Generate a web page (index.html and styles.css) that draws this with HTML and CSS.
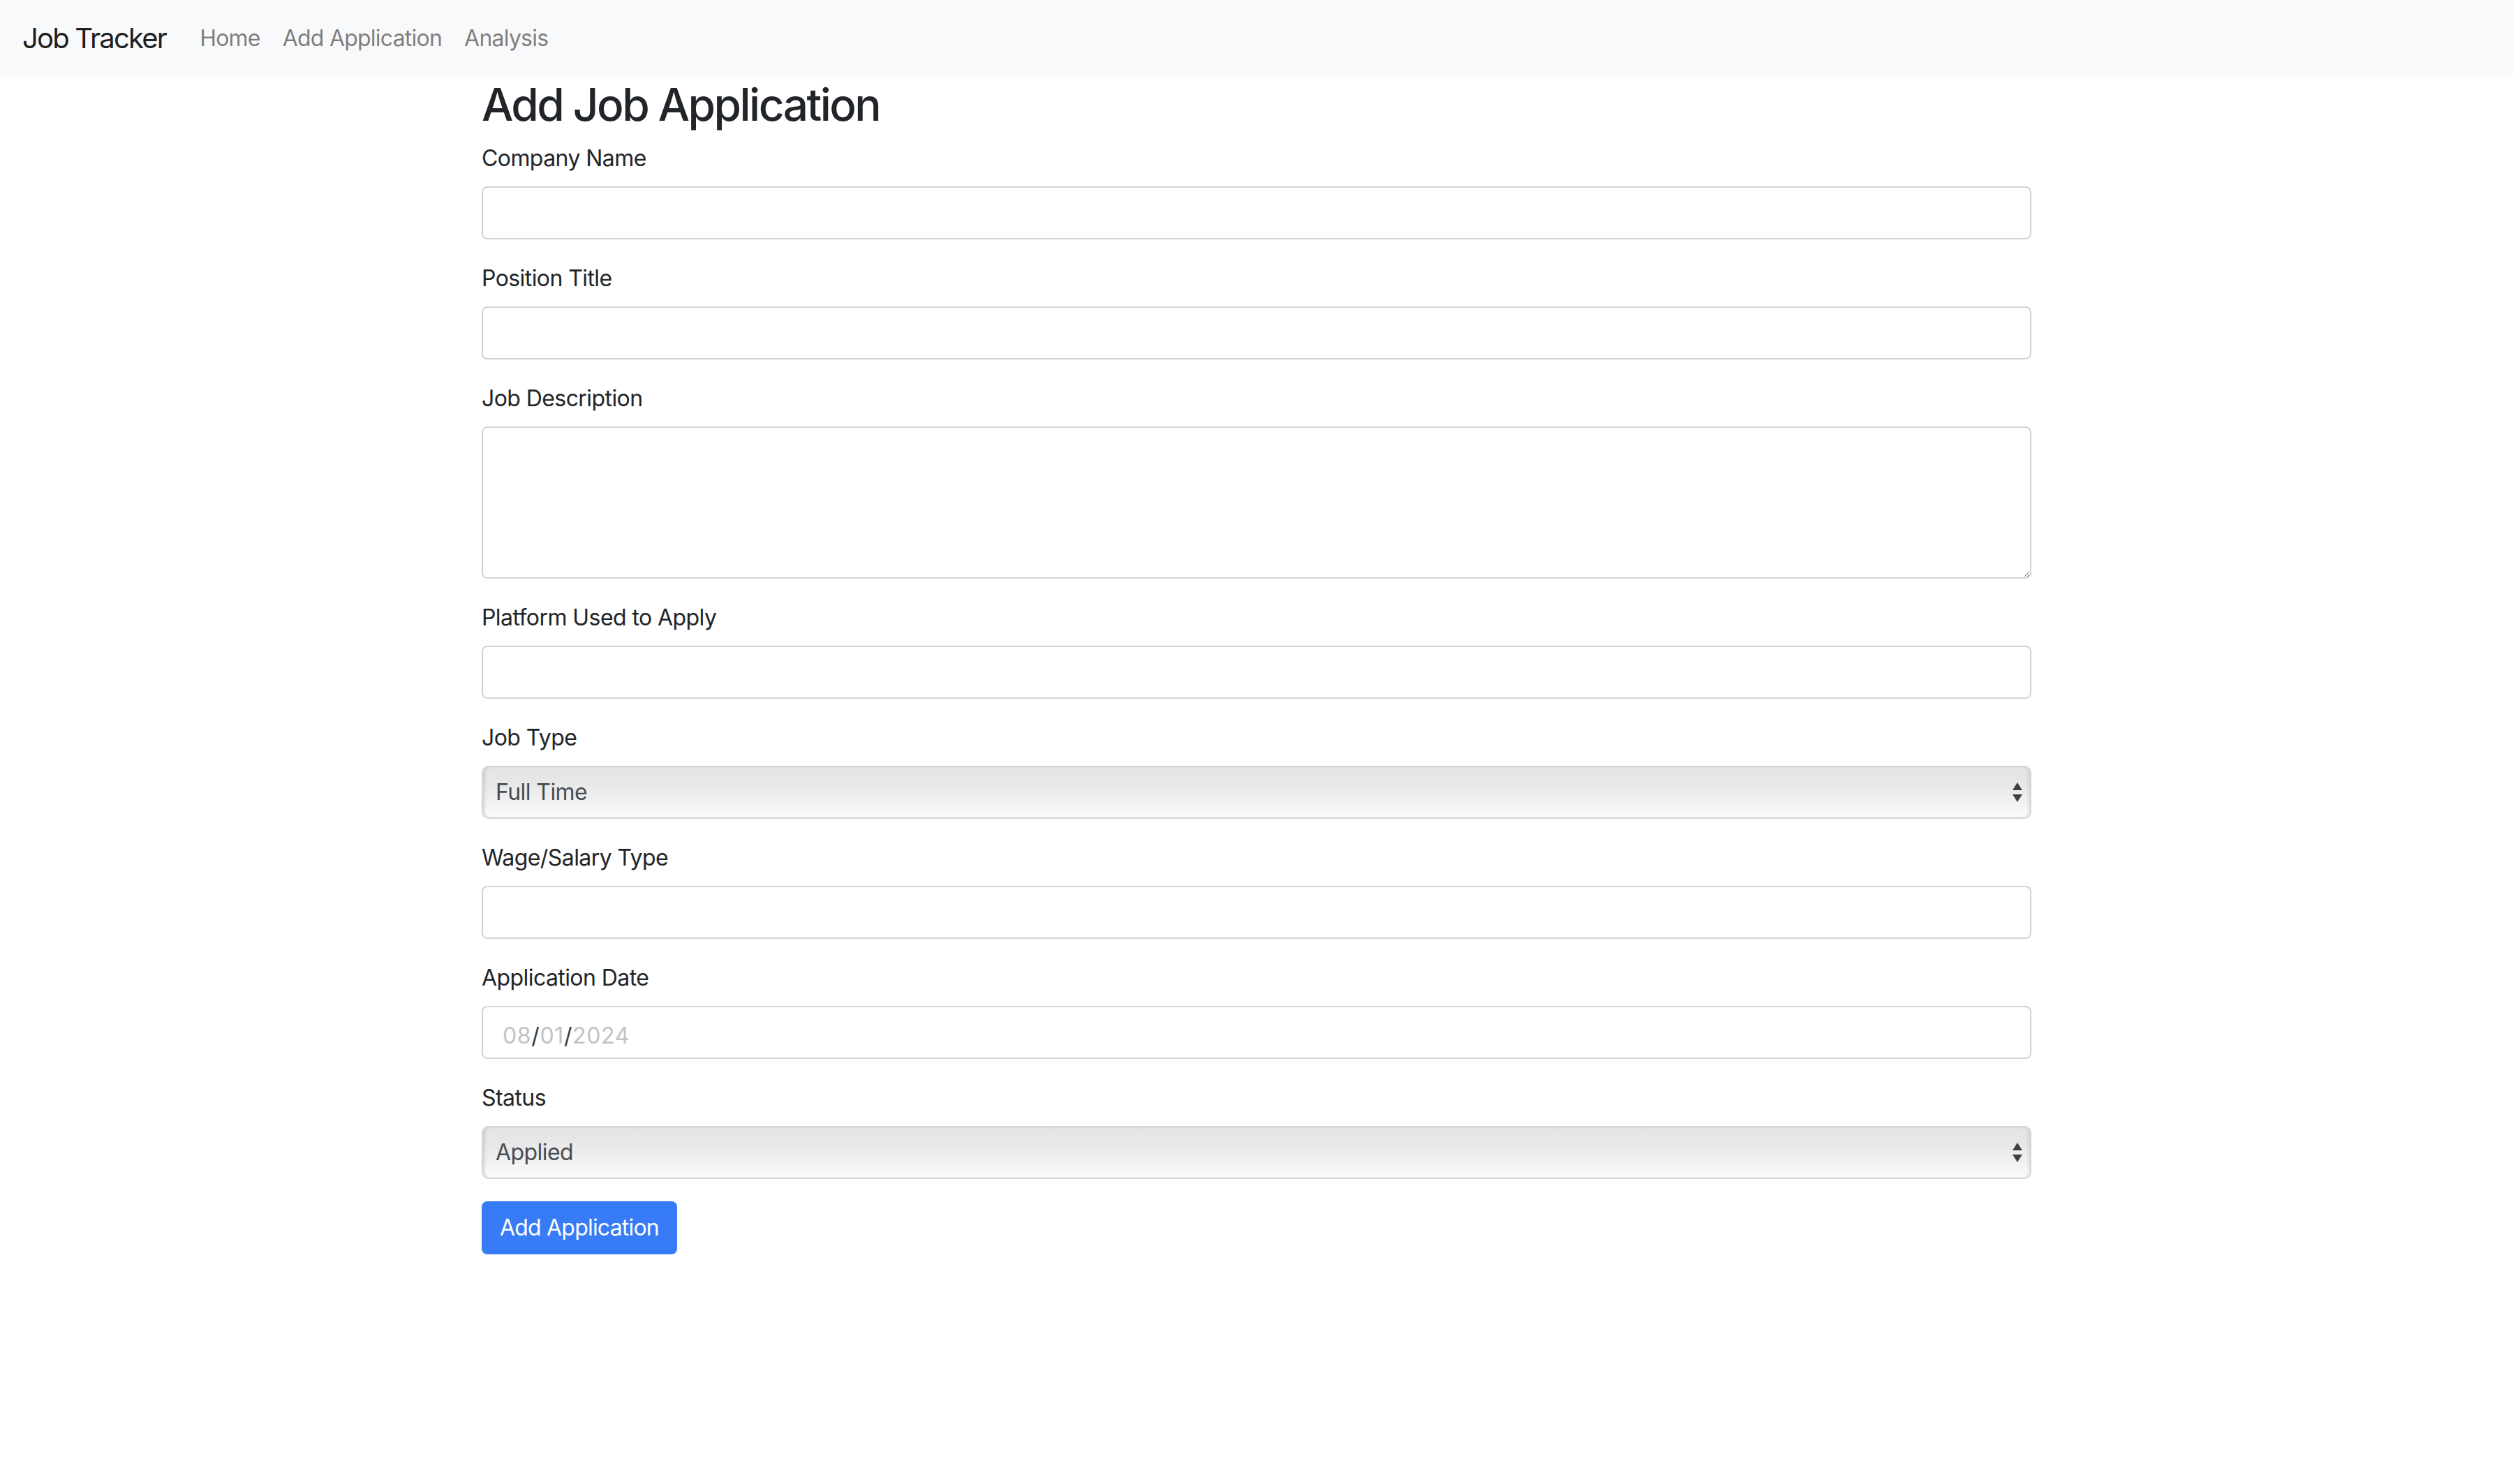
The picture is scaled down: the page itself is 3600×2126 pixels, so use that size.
FILE: index.html
```html
<!DOCTYPE html>
<html lang="en">
<head>
<meta charset="utf-8">
<title>Job Tracker</title>
<link rel="stylesheet" href="styles.css">
</head>
<body>
<nav class="navbar">
  <a class="brand" href="#">Job Tracker</a>
  <ul class="nav">
    <li><a class="nav-link" href="#">Home</a></li>
    <li><a class="nav-link" href="#">Add Application</a></li>
    <li><a class="nav-link" href="#">Analysis</a></li>
  </ul>
</nav>
<main class="container">
  <h2 class="title">Add Job Application</h2>
  <form class="form">
    <div class="form-group">
      <label class="label" for="company">Company Name</label>
      <input class="form-control" id="company" type="text">
    </div>
    <div class="form-group">
      <label class="label" for="position">Position Title</label>
      <input class="form-control" id="position" type="text">
    </div>
    <div class="form-group">
      <label class="label" for="desc">Job Description</label>
      <textarea class="form-control textarea" id="desc"></textarea>
    </div>
    <div class="form-group">
      <label class="label" for="platform">Platform Used to Apply</label>
      <input class="form-control" id="platform" type="text">
    </div>
    <div class="form-group">
      <label class="label" for="jobtype">Job Type</label>
      <div class="select-wrap">
        <select class="select" id="jobtype">
          <option>Full Time</option>
          <option>Part Time</option>
          <option>Contract</option>
          <option>Internship</option>
        </select>
        <svg class="select-arrows" width="16" height="30" viewBox="0 0 16 30"><path d="M8 0 L15 11 L1 11 Z" fill="#3d4247"/><path d="M1 17 L15 17 L8 28 Z" fill="#3d4247"/></svg>
      </div>
    </div>
    <div class="form-group">
      <label class="label" for="wage">Wage/Salary Type</label>
      <input class="form-control" id="wage" type="text">
    </div>
    <div class="form-group">
      <label class="label">Application Date</label>
      <div class="form-control date"><span class="seg">08</span><span class="sep">/</span><span class="seg">01</span><span class="sep">/</span><span class="seg">2024</span></div>
    </div>
    <div class="form-group">
      <label class="label" for="status">Status</label>
      <div class="select-wrap">
        <select class="select" id="status">
          <option>Applied</option>
          <option>Interviewing</option>
          <option>Offer</option>
          <option>Rejected</option>
        </select>
        <svg class="select-arrows" width="16" height="30" viewBox="0 0 16 30"><path d="M8 0 L15 11 L1 11 Z" fill="#3d4247"/><path d="M1 17 L15 17 L8 28 Z" fill="#3d4247"/></svg>
      </div>
    </div>
    <button class="btn" type="button">Add Application</button>
  </form>
</main>
</body>
</html>
```

FILE: styles.css
```css
html, body {
  margin: 0;
  padding: 0;
  background: #ffffff;
}
body {
  font-family: Inter, "Noto Sans", "Liberation Sans", sans-serif;
  font-size: 32px;
  line-height: 1.5;
  letter-spacing: -0.018em;
  color: #212529;
}
.navbar {
  display: flex;
  align-items: center;
  background: #f8f9fa;
  padding: 15px 32px;
}
.brand {
  font-size: 40px;
  line-height: 60px;
  padding: 10px 0;
  margin-right: 32px;
  letter-spacing: -0.045em;
  color: rgba(0, 0, 0, 0.9);
  text-decoration: none;
}
.nav {
  display: flex;
  list-style: none;
  margin: 0;
  padding: 0;
}
.nav-link {
  display: block;
  padding: 16px;
  letter-spacing: -0.024em;
  color: rgba(0, 0, 0, 0.5);
  text-decoration: none;
}
.container {
  width: 2220px;
  margin: 0 auto;
  padding: 0 30px;
}
.title {
  font-size: 64px;
  font-weight: 500;
  line-height: 1.2;
  letter-spacing: -0.04em;
  margin: 2px 0 14px;
}
.form-group {
  margin-bottom: 32px;
}
.label {
  display: inline-block;
  margin-bottom: 16px;
}
.form-control {
  display: block;
  box-sizing: border-box;
  width: 100%;
  height: 76px;
  padding: 12px 24px;
  font: inherit;
  letter-spacing: inherit;
  color: #495057;
  background: #fff;
  border: 2px solid #ced4da;
  border-radius: 8px;
  outline: none;
}
.textarea {
  height: 218px;
  resize: vertical;
}
.date {
  padding-left: 28px;
  padding-top: 17px;
  letter-spacing: 0.02em;
}
.seg {
  color: #c0c3c8;
}
.sep {
  color: #343a40;
}
.select-wrap {
  position: relative;
}
.select {
  display: block;
  box-sizing: border-box;
  width: 100%;
  height: 76px;
  padding: 10px 18px;
  font: inherit;
  letter-spacing: inherit;
  color: #474d53;
  -webkit-appearance: none;
  appearance: none;
  border: 2px solid #d1d5da;
  border-radius: 10px;
  background: linear-gradient(#e3e3e3, #e8e8e8 35%, #f2f2f2 70%, #fbfbfb);
  box-shadow: inset 5px 0 5px -3px rgba(0, 0, 0, 0.13), inset -5px 0 5px -3px rgba(0, 0, 0, 0.1);
  outline: none;
}
.select-arrows {
  position: absolute;
  right: 12px;
  top: 24px;
}
.btn {
  display: inline-block;
  padding: 12px 24px;
  font: inherit;
  letter-spacing: -0.025em;
  color: #fff;
  background: #377bf6;
  border: 2px solid #377bf6;
  border-radius: 8px;
  cursor: pointer;
}
```
